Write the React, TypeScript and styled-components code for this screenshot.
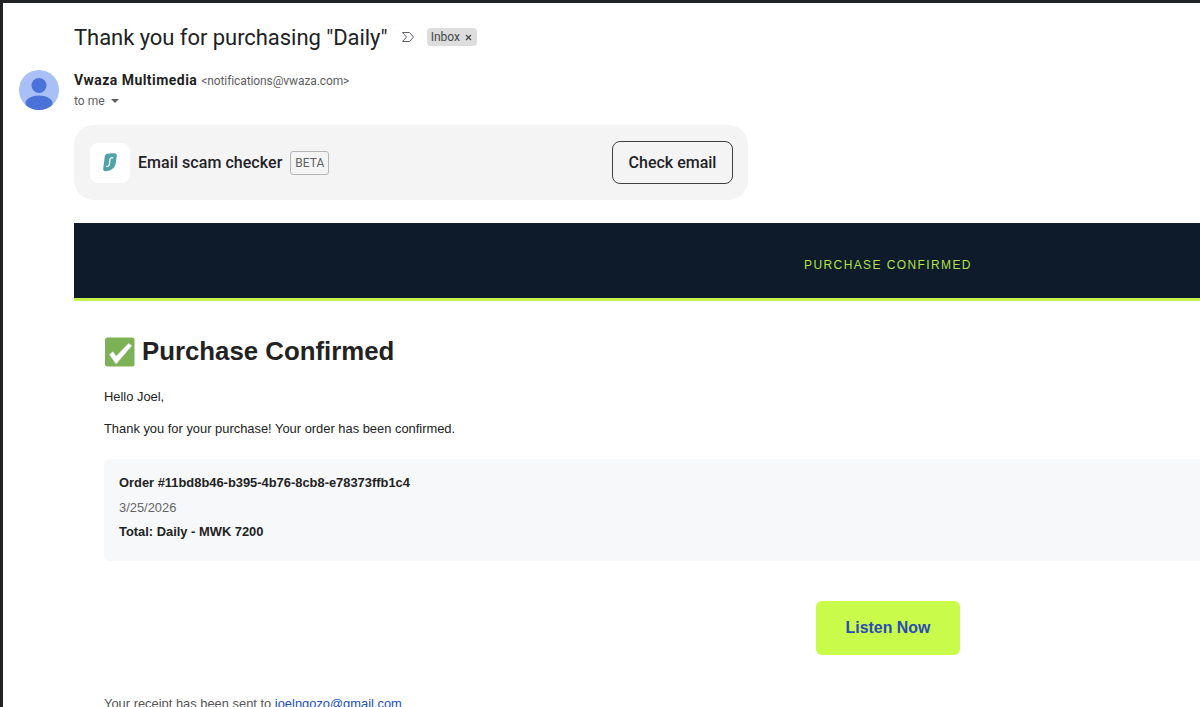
import styled, { createGlobalStyle } from "styled-components";

const GlobalStyle = createGlobalStyle`
  html, body {
    margin: 0;
    padding: 0;
    background: #fff;
    overflow: hidden;
  }
`;

const Page = styled.div`
  width: 1200px;
  height: 707px;
  box-sizing: border-box;
  border-top: 3px solid #222325;
  border-left: 3px solid #222325;
  padding: 0 0 0 16px;
  display: flex;
  overflow: hidden;
  background: #fff;
  font-family: "Liberation Sans", Arial, sans-serif;
`;

const AvatarColumn = styled.div`
  width: 55px;
  flex-shrink: 0;
  padding-top: 67px;
`;

const Avatar = styled.div`
  width: 40px;
  height: 40px;
`;

const Main = styled.div`
  width: 1628px;
  flex-shrink: 0;
`;

const SubjectRow = styled.div`
  display: flex;
  align-items: center;
  height: 28px;
  margin-top: 20px;
`;

const Subject = styled.h1`
  margin: 0;
  font-family: Roboto, sans-serif;
  font-size: 22px;
  font-weight: 400;
  letter-spacing: -0.05px;
  color: #202124;
  white-space: nowrap;
`;

const Marker = styled.svg`
  width: 14px;
  height: 12px;
  margin-left: 13px;
`;

const Label = styled.span`
  display: flex;
  align-items: center;
  gap: 5px;
  height: 18px;
  margin-left: 12px;
  padding: 0 5px 0 4px;
  border-radius: 4px;
  background: #dddddd;
  font-family: Roboto, sans-serif;
  font-size: 12px;
  color: #444746;
`;

const SenderRow = styled.div`
  margin-top: 21px;
  height: 18px;
  display: flex;
  align-items: baseline;
  white-space: nowrap;
  font-family: Roboto, sans-serif;
`;

const SenderName = styled.span`
  font-size: 14px;
  font-weight: 700;
  letter-spacing: 0.45px;
  color: #1f1f1f;
`;

const SenderAddress = styled.span`
  margin-left: 4px;
  font-size: 12px;
  letter-spacing: -0.1px;
  color: #5e5e5e;
`;

const Recipient = styled.div`
  display: flex;
  align-items: center;
  gap: 5px;
  height: 18px;
  margin-top: 2px;
  font-family: Roboto, sans-serif;
  font-size: 12px;
  color: #5e5e5e;
`;

const Caret = styled.span`
  width: 0;
  height: 0;
  margin-left: 1px;
  border-left: 4px solid transparent;
  border-right: 4px solid transparent;
  border-top: 4px solid #5e5e5e;
`;

const ScamBanner = styled.div`
  width: 674px;
  height: 75px;
  box-sizing: border-box;
  margin-top: 15px;
  padding: 0 15px 0 16px;
  display: flex;
  align-items: center;
  border-radius: 20px;
  background: #f4f4f4;
`;

const LogoTile = styled.div`
  width: 40px;
  height: 40px;
  display: flex;
  align-items: center;
  justify-content: center;
  border-radius: 8px;
  background: #fff;
`;

const BannerTitle = styled.span`
  margin-left: 8px;
  font-family: Roboto, sans-serif;
  font-size: 16px;
  font-weight: 500;
  letter-spacing: 0.05px;
  color: #1f2226;
`;

const BetaTag = styled.span`
  margin-left: 8px;
  padding: 0 4px;
  height: 22px;
  line-height: 22px;
  border: 1px solid #b5b5b5;
  border-radius: 3px;
  font-family: Roboto, sans-serif;
  font-size: 12px;
  color: #5f6266;
`;

const CheckButton = styled.button`
  margin-left: auto;
  width: 121px;
  height: 43px;
  border: 1px solid #3d3f42;
  border-radius: 8px;
  background: transparent;
  font-family: Roboto, sans-serif;
  font-size: 16px;
  font-weight: 500;
  color: #1f2226;
`;

const EmailHeader = styled.div`
  margin-top: 23px;
  height: 75px;
  display: flex;
  align-items: center;
  justify-content: center;
  background: #0d1b2a;
  border-bottom: 3px solid #c6f24e;
`;

const HeaderLabel = styled.span`
  margin-top: 8px;
  font-size: 12px;
  letter-spacing: 1.4px;
  color: #b5e048;
`;

const EmailBody = styled.div`
  padding: 30px 30px 0;
`;

const Heading = styled.h2`
  margin: 0;
  display: flex;
  align-items: center;
  gap: 6px;
  height: 40px;
  font-size: 25.8px;
  font-weight: 700;
  color: #222222;
`;

const Greeting = styled.p`
  margin: 18px 0 0;
  font-size: 12.9px;
  line-height: 16px;
  color: #222222;
`;

const Paragraph = styled.p`
  margin: 16px 0 0;
  font-size: 12.9px;
  line-height: 16px;
  color: #222222;
`;

const OrderPanel = styled.div`
  margin-top: 22px;
  height: 102px;
  box-sizing: border-box;
  padding: 16px 15px;
  border-radius: 6px;
  background: #f7f8fa;
`;

const OrderLine = styled.div<{ $muted?: boolean }>`
  height: 16px;
  line-height: 16px;
  margin-bottom: 8.5px;
  font-size: 12.9px;
  font-weight: ${(p) => (p.$muted ? 400 : 700)};
  color: ${(p) => (p.$muted ? "#666666" : "#222222")};
`;

const ButtonRow = styled.div`
  margin-top: 40px;
  display: flex;
  justify-content: center;
`;

const ListenButton = styled.a`
  width: 144px;
  height: 54px;
  display: flex;
  align-items: center;
  justify-content: center;
  border-radius: 6px;
  background: #c9fb4a;
  font-size: 15.9px;
  font-weight: 700;
  color: #2a4bb5;
`;

const Receipt = styled.p`
  margin: 41px 0 0;
  font-size: 12.9px;
  line-height: 16px;
  color: #555555;
`;

const MailLink = styled.a`
  color: #1a4fc0;
`;

const App = () => (
  <Page>
    <GlobalStyle />
    <AvatarColumn>
      <Avatar>
        <svg width="40" height="40" viewBox="0 0 40 40">
          <defs>
            <clipPath id="avatar-clip">
              <circle cx="20" cy="20" r="20" />
            </clipPath>
          </defs>
          <circle cx="20" cy="20" r="20" fill="#a8c0f5" />
          <g clipPath="url(#avatar-clip)" fill="#4a72d8">
            <circle cx="20" cy="15.5" r="7.5" />
            <ellipse cx="20" cy="33" rx="13.5" ry="7.5" />
          </g>
        </svg>
      </Avatar>
    </AvatarColumn>
    <Main>
      <SubjectRow>
        <Subject>Thank you for purchasing "Daily"</Subject>
        <Marker viewBox="0 0 14 12" fill="none" stroke="#5f6368" strokeWidth="1">
          <path d="M1.5 1.5h7L12.5 6l-4 4.5h-7L5.5 6z" />
        </Marker>
        <Label>
          Inbox
          <svg width="7" height="7" viewBox="0 0 7 7" stroke="#444746" strokeWidth="1.2">
            <path d="M1 1l5 5M6 1L1 6" />
          </svg>
        </Label>
      </SubjectRow>
      <SenderRow>
        <SenderName>Vwaza Multimedia</SenderName>
        <SenderAddress>&lt;notifications@vwaza.com&gt;</SenderAddress>
      </SenderRow>
      <Recipient>
        to me
        <Caret />
      </Recipient>
      <ScamBanner>
        <LogoTile>
          <svg width="14" height="19" viewBox="0 0 14 19">
            <path
              d="M4 .8C6.8.2 9.800.1 12.300.500c1 .2 1.600 1 1.500 2l-1 7.500c-.4 3.500-3 6.400-6.300 7.500-1.500.5-3 .8-4.300.8-1.300 0-2.200-.9-2-2.200L1.800 3.300C2 2 2.800 1.100 4 .8z"
              fill="#4fa3a8"
            />
            <path
              d="M9.800 4.800C8.300 4.300 7.100 5.100 6.900 6.500L6.400 11.500c-.2 1.400-1.300 2.200-2.700 1.800"
              fill="none"
              stroke="#fff"
              strokeWidth="1.300"
              strokeLinecap="round"
            />
          </svg>
        </LogoTile>
        <BannerTitle>Email scam checker</BannerTitle>
        <BetaTag>BETA</BetaTag>
        <CheckButton>Check email</CheckButton>
      </ScamBanner>
      <EmailHeader>
        <HeaderLabel>PURCHASE CONFIRMED</HeaderLabel>
      </EmailHeader>
      <EmailBody>
        <Heading>
          <svg width="32" height="32" viewBox="0 0 32 32">
            <rect x="1" y="2.500" width="29.500" height="29" rx="2.500" fill="#7cb156" />
            <path
              d="M5.500 19.500l3.500-2.800 3.200 4.600L24.500 8.500l3.300 2.200L12 29z"
              fill="#fff"
              stroke="#dfe3dc"
              strokeWidth="0.6"
            />
          </svg>
          Purchase Confirmed
        </Heading>
        <Greeting>Hello Joel,</Greeting>
        <Paragraph>Thank you for your purchase! Your order has been confirmed.</Paragraph>
        <OrderPanel>
          <OrderLine>Order #11bd8b46-b395-4b76-8cb8-e78373ffb1c4</OrderLine>
          <OrderLine $muted>3/25/2026</OrderLine>
          <OrderLine>Total: Daily - MWK 7200</OrderLine>
        </OrderPanel>
        <ButtonRow>
          <ListenButton>Listen Now</ListenButton>
        </ButtonRow>
        <Receipt>
          Your receipt has been sent to <MailLink>joelngozo@gmail.com</MailLink>
        </Receipt>
      </EmailBody>
    </Main>
  </Page>
);

export default App;
